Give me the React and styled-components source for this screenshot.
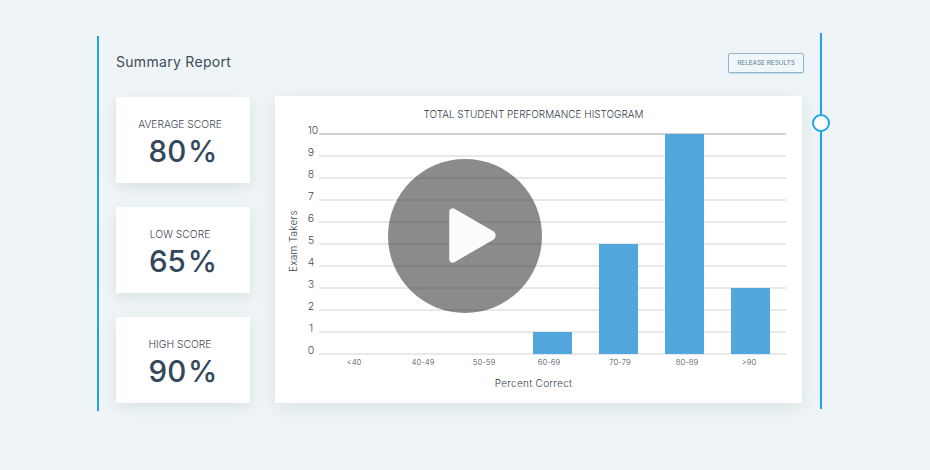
import React from "react";
import styled, { createGlobalStyle } from "styled-components";

const Global = createGlobalStyle`
  html, body { margin: 0; padding: 0; background: #eff5f6; }
  body { font-family: "Inter", "Liberation Sans", sans-serif; color: #3c4a59; }
`;

const Page = styled.div`
  width: 930px;
  height: 470px;
  overflow: hidden;
  display: flex;
  align-items: flex-start;
  padding: 33px 0 0 97px;
  box-sizing: border-box;
  background: #eff5f6;
`;

const LeftRail = styled.div`
  flex: none;
  width: 2px;
  height: 375px;
  margin-top: 3px;
  background: #1ea5e6;
`;

const Report = styled.main`
  flex: none;
  width: 704px;
  margin-left: 17px;
  padding-top: 3px;
  display: flex;
  flex-direction: column;
`;

const Header = styled.header`
  height: 60px;
  padding-right: 16px;
  display: flex;
  align-items: flex-start;
  justify-content: space-between;
`;

const Title = styled.h1`
  margin: 16px 0 0;
  font-size: 14px;
  line-height: 20px;
  font-weight: 400;
  letter-spacing: 0.3px;
  color: #3d4b5a;
`;

const ReleaseButton = styled.button`
  margin: 17px 0 0;
  width: 76px;
  height: 20px;
  padding: 0;
  border: 1px solid #8db7d0;
  border-radius: 2px;
  background: #f1f7f9;
  box-shadow: 0 1px 1px rgba(70, 120, 150, 0.2);
  font-family: inherit;
  font-size: 6.4px;
  font-weight: 400;
  white-space: nowrap;
  color: #547d9c;
`;

const Body = styled.div`
  display: flex;
  align-items: flex-start;
  gap: 25px;
`;

const Stats = styled.div`
  flex: none;
  width: 134px;
  margin-top: 1px;
  display: flex;
  flex-direction: column;
  gap: 24px;
`;

const StatCard = styled.section`
  height: 86px;
  box-sizing: border-box;
  padding-top: 20px;
  background: #fff;
  box-shadow: 0 5px 14px rgba(80, 105, 120, 0.13);
  text-align: center;
`;

const StatLabel = styled.div`
  padding-right: 6px;
  font-size: 10.3px;
  line-height: 14px;
  font-weight: 300;
  color: #3c4854;
`;

const StatValue = styled.div`
  margin-top: 3px;
  font-size: 29.5px;
  line-height: 34px;
  font-weight: 500;
  word-spacing: -6px;
  color: #34475a;
`;

const ChartCard = styled.section`
  position: relative;
  flex: none;
  width: 527px;
  height: 307px;
  background: #fff;
  box-shadow: 0 5px 18px rgba(80, 105, 120, 0.13);
`;

const ChartSvg = styled.svg`
  display: block;
  width: 527px;
  height: 307px;
  font-family: "Inter", "Liberation Sans", sans-serif;
`;

const PlayButton = styled.button`
  position: absolute;
  left: 113px;
  top: 63px;
  width: 154px;
  height: 154px;
  padding: 0;
  border: 0;
  border-radius: 50%;
  background: rgba(58, 54, 56, 0.58);
  display: flex;
  align-items: center;
  justify-content: center;
`;

const RightRail = styled.div`
  position: relative;
  flex: none;
  width: 2px;
  height: 376px;
  background: #1ea5e6;
`;

const Knob = styled.span`
  position: absolute;
  left: -8px;
  top: 81px;
  width: 18px;
  height: 18px;
  box-sizing: border-box;
  border: 2px solid #1ea5e6;
  border-radius: 50%;
  background: #fff;
`;

const stats = [
  { label: "AVERAGE SCORE", value: "80 %" },
  { label: "LOW SCORE", value: "65 %" },
  { label: "HIGH SCORE", value: "90 %" },
];

const ticks = [10, 9, 8, 7, 6, 5, 4, 3, 2, 1, 0];
const cats = [
  { label: "<40", x: 354 },
  { label: "40-49", x: 423 },
  { label: "50-59", x: 484 },
  { label: "60-69", x: 549 },
  { label: "70-79", x: 620 },
  { label: "80-89", x: 687 },
  { label: ">90", x: 749 },
];
const bars = [
  { x: 533, w: 39, n: 1 },
  { x: 599, w: 39, n: 5 },
  { x: 665, w: 39, n: 10 },
  { x: 731, w: 39, n: 3 },
];

function Chart() {
  return (
    <ChartSvg viewBox="275 96 527 307">
      <text x="533.5" y="118" textAnchor="middle" fontSize="9.95" fontWeight="300" fill="#2f3b47">
        TOTAL STUDENT PERFORMANCE HISTOGRAM
      </text>
      {ticks.map((t) => {
        const y = 354 - t * 22;
        return (
          <g key={t}>
            <line x1="319" x2="786" y1={y} y2={y} stroke={t === 10 ? "#a3a3a3" : "#d2d2d2"} strokeWidth="1" />
            <text x={t === 10 ? 313 : 311} y={y} textAnchor="middle" fontSize="10.5" fontWeight="300" fill="#3f4a55">{t}</text>
          </g>
        );
      })}
      {bars.map((b) => (
        <rect key={b.x} x={b.x} y={354 - b.n * 22} width={b.w} height={b.n * 22} fill="#52a8dc" />
      ))}
      {cats.map((c) => (
        <text key={c.label} x={c.x} y="365" textAnchor="middle" fontSize="7.8" fontWeight="300" fill="#4a545e">{c.label}</text>
      ))}
      <text x="533.5" y="387" textAnchor="middle" fontSize="10" fontWeight="300" letterSpacing="0.3" fill="#333f4a">Percent Correct</text>
      <text transform="translate(297 241) rotate(-90)" textAnchor="middle" fontSize="10" fontWeight="300" letterSpacing="0.25" fill="#333f4a">Exam Takers</text>
    </ChartSvg>
  );
}

export default function App() {
  return (
    <Page>
      <Global />
      <LeftRail />
      <Report>
        <Header>
          <Title>Summary Report</Title>
          <ReleaseButton>RELEASE RESULTS</ReleaseButton>
        </Header>
        <Body>
          <Stats>
            {stats.map((s) => (
              <StatCard key={s.label}>
                <StatLabel>{s.label}</StatLabel>
                <StatValue>{s.value}</StatValue>
              </StatCard>
            ))}
          </Stats>
          <ChartCard>
            <Chart />
            <PlayButton aria-label="Play">
              <svg width="154" height="154" viewBox="0 0 154 154">
                <path
                  d="M62 53 C62 50.5 64 49.5 66 50.5 L105 73 C107.5 74.5 107.5 78.5 105 80 L66 102.5 C64 103.5 62 102.5 62 100 Z"
                  fill="#fbfcfd"
                  stroke="#fbfcfd"
                  strokeWidth="1.5"
                  strokeLinejoin="round"
                />
              </svg>
            </PlayButton>
          </ChartCard>
        </Body>
      </Report>
      <RightRail>
        <Knob />
      </RightRail>
    </Page>
  );
}
